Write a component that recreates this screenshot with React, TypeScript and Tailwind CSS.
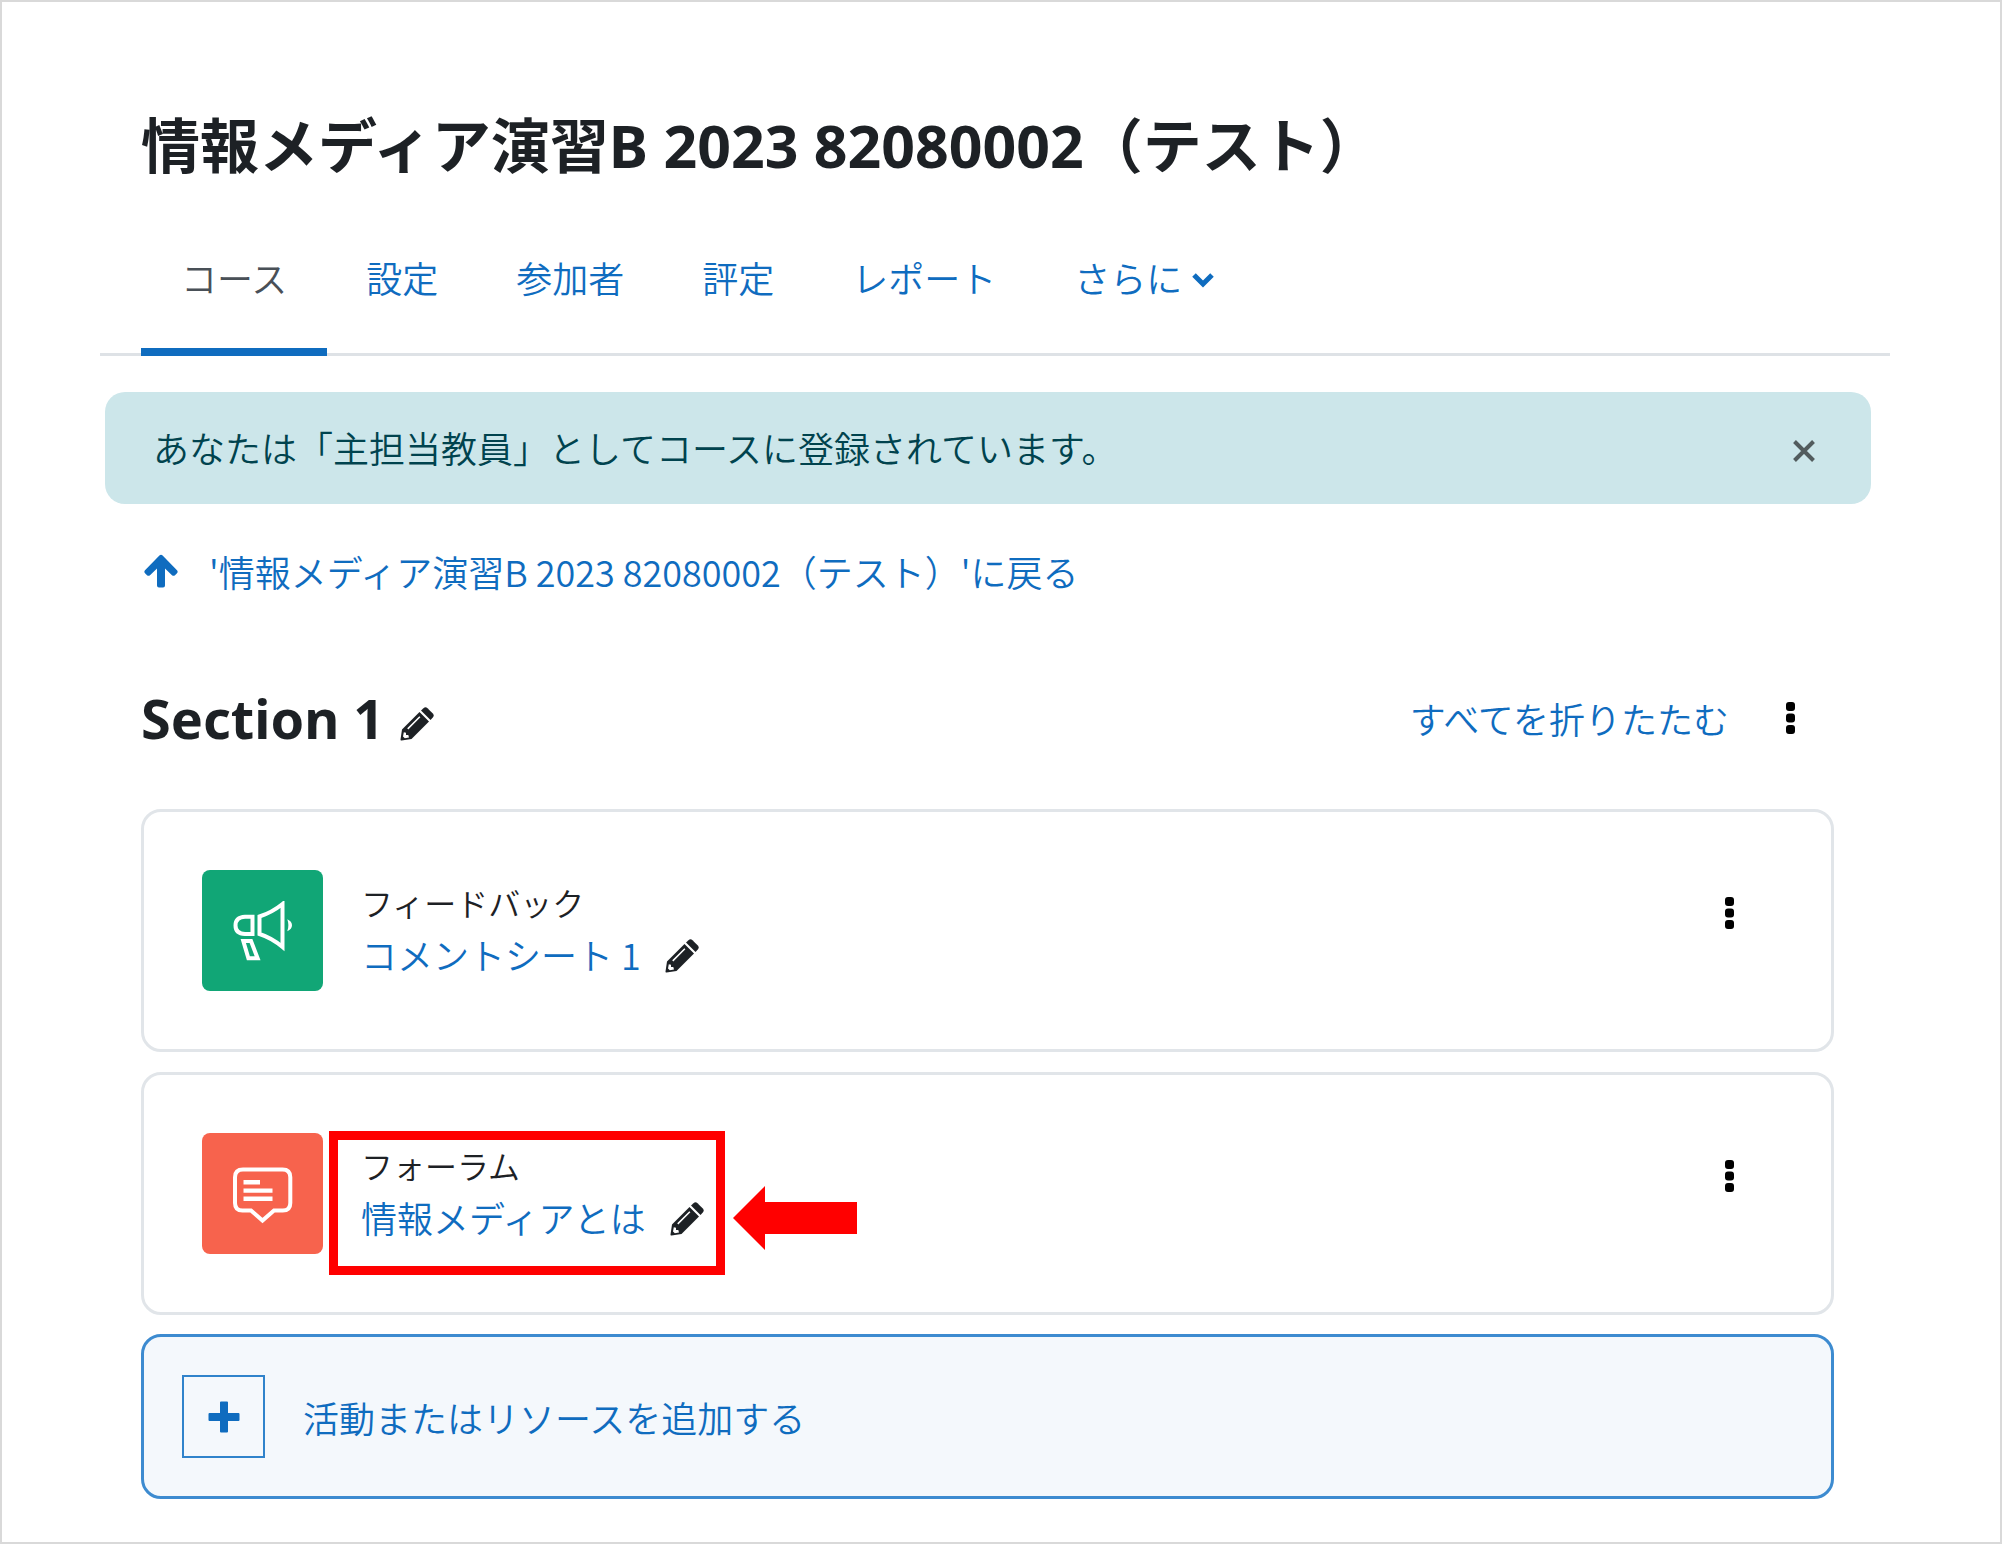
import React from "react";

const BODY_FONT = "font-['Noto_Sans_CJK_JP','Noto_Sans',sans-serif]";
const HEADING_FONT = "font-['Noto_Sans','Noto_Sans_CJK_JP',sans-serif]";

function Pencil() {
  return (
    <svg viewBox="0 0 34 34" className="size-[34px]" fill="#1d2125" aria-hidden="true">
      <path
        fillRule="evenodd"
        d="M2 22.500 19.500 5 29 14.500 11.500 32 1.500 33.500Q.300 33.700.500 32.500ZM3.800 25.200 3 29.500 4.800 31.200 9 30.400 8.300 28 6 28 6 25.800ZM19.300 9.200 7.200 21.300 8.300 22.400 20.400 10.300Z"
      />
      <path d="M21 3.500 23.500 1.200Q25.500-.600 27.500 1.200L32.800 6.500Q34.600 8.500 32.800 10.500L30.500 13Z" />
    </svg>
  );
}

function Dots() {
  return (
    <svg viewBox="0 0 12 32" className="h-8 w-3" fill="#000" aria-hidden="true">
      <rect x="1" y="0" width="9" height="9" rx="3" />
      <rect x="1" y="11.500" width="9" height="9" rx="3" />
      <rect x="1" y="23" width="9" height="9" rx="3" />
    </svg>
  );
}

function Megaphone() {
  return (
    <svg viewBox="0 0 60 60" className="size-[60px]" fill="none" stroke="#fff" strokeWidth="4" aria-hidden="true">
      <path d="M19.500 15.800V33h-7.500Q2.500 32.500 2.500 24.400T12 15.800Z" />
      <path d="M26.500 15.500Q39 11.500 49.500 3v43Q39 37 26.500 33Z" />
      <path d="M10.300 40.100h7.700l6.600 17.100h-9.200Z" />
      <path d="M54.300 18.300Q59 20.500 59 24.300T54.300 30.300Q56.500 24.300 54.300 18.300Z" fill="#fff" stroke="none" />
    </svg>
  );
}

function Speech() {
  return (
    <svg viewBox="0 0 60 60" className="size-[60px]" fill="none" stroke="#fff" strokeWidth="4" aria-hidden="true">
      <path d="M10 5.500h39.500q7.800 0 7.800 7.800V39q0 7.500-7.500 7.500H41L29.500 56.500 18 46.500H9.500Q2 46.500 2 39V13.300Q2 5.500 10 5.500Z" />
      <path d="M10.500 18.200h16.500M10.500 26.600h29M10.500 34.800h29" strokeWidth="4.400" />
    </svg>
  );
}

const TABS = ["設定", "参加者", "評定", "レポート"];

function Activity({
  kind,
  name,
  color,
  icon,
  children,
}: {
  kind: string;
  name: string;
  color: string;
  icon: React.ReactNode;
  children?: React.ReactNode;
}) {
  return (
    <li className="relative flex items-start rounded-[20px] border-[3px] border-[#e1e5e9] px-[58px] py-[58px]">
      <div className={`flex size-[121px] shrink-0 items-center justify-center rounded-lg ${color}`}>{icon}</div>
      <div className="ml-[38px] grow pt-[6px]">
        <p className="text-[32px] leading-[52px] text-[#1d2125]">{kind}</p>
        <div className="flex items-center gap-6">
          <a href="#activity" className="text-[36px] leading-[52px] text-[#0f6cbf]">{name}</a>
          <button type="button" aria-label={`${name}を編集`} className="pt-1"><Pencil /></button>
        </div>
      </div>
      <button type="button" aria-label={`${kind}メニュー`} className="mt-[27px] mr-[37px]"><Dots /></button>
      {children}
    </li>
  );
}

export default function App() {
  return (
    <div className={`min-h-screen border-2 border-[#d9d9d9] bg-white text-[36px] font-[350] text-[#0f6cbf] ${BODY_FONT}`}>
      <header className="mr-[110px] ml-[98px] border-b-[3px] border-[#dee2e6] pl-[41px]">
        <h1 className={`pt-[98px] text-[59px] leading-[90px] font-bold text-[#1d2125] ${HEADING_FONT}`}>
          情報メディア演習B 2023 82080002（テスト）
        </h1>
        <nav className="-mb-[3px] flex pt-[18px]">
          <a href="#course" className="border-b-8 border-[#0f6cbf] px-10 pt-[43px] pb-[45px] leading-[52px] text-[#495057]">コース</a>
          {TABS.map((t) => (
            <a key={t} href="#tab" className="px-[39px] pt-[43px] leading-[52px]">{t}</a>
          ))}
          <button type="button" className="flex items-start gap-[10px] px-[39px] pt-[43px] leading-[52px]">
            さらに
            <svg viewBox="0 0 22 16" className="mt-[21px] h-4 w-[22px]" fill="none" stroke="currentColor" strokeWidth="5" aria-hidden="true">
              <path d="m2 3 9 9 9-9" />
            </svg>
          </button>
        </nav>
      </header>

      <div role="status" className="mt-9 mr-[129px] ml-[103px] flex items-center justify-between rounded-[20px] bg-[#cce6ea] pt-[29px] pb-[31px] pr-[56px] pl-[48px] leading-[52px] text-[#00434e]">
        <p>あなたは「主担当教員」としてコースに登録されています。</p>
        <button type="button" aria-label="閉じる" className="pt-2">
          <svg viewBox="0 0 22 22" className="size-[22px]" fill="none" stroke="#525c5e" strokeWidth="4" aria-hidden="true">
            <path d="m1.500 1.500 19 19m0-19-19 19" />
          </svg>
        </button>
      </div>

      <main className="mr-[166px] ml-[139px]">
        <a href="#back" className="mt-[41px] flex items-center gap-[31px] pl-[3px] leading-[52px]">
          <svg viewBox="0 0 34 34" className="size-[34px]" fill="currentColor" aria-hidden="true">
            <path d="M15.400 1.600Q17 0 18.600 1.600L33 16.200Q34.300 17.700 33 19.200L31 21.200Q29.500 22.500 28 21.200L21 14.500V31.500Q21 33.500 19 33.500H15Q13 33.500 13 31.500V14.500L6 21.200Q4.500 22.500 3 21.200L1 19.200Q-.300 17.700 1 16.200Z" />
          </svg>
          <span>'情報メディア演習B 2023 82080002（テスト）'に戻る</span>
        </a>

        <div className="mt-[81px] flex items-center">
          <h2 className={`text-[54px] leading-[80px] font-bold text-[#1d2125] ${HEADING_FONT}`}>Section 1</h2>
          <button type="button" aria-label="セクションを編集" className="ml-4 pt-3"><Pencil /></button>
          <button type="button" className="ml-auto">すべてを折りたたむ</button>
          <button type="button" aria-label="セクションメニュー" className="mr-[37px] ml-[56px]"><Dots /></button>
        </div>

        <ul className="mt-[51px] flex flex-col gap-5">
          <Activity kind="フィードバック" name="コメントシート 1" color="bg-[#11a676]" icon={<Megaphone />} />
          <Activity kind="フォーラム" name="情報メディアとは" color="bg-[#f7634d]" icon={<Speech />}>
            <div className="absolute top-[56px] left-[185px] flex items-center">
              <div className="h-[144px] w-[396px] border-[9px] border-[#ff0000]" />
              <svg viewBox="0 0 124 64" className="ml-2 mt-[30px] h-16 w-[124px]" fill="#ff0000" aria-hidden="true">
                <path d="M0 32 32 0v16h92v32H32v16Z" />
              </svg>
            </div>
          </Activity>
        </ul>

        <button type="button" className="mt-[19px] flex w-full items-center gap-[38px] rounded-[20px] border-[3px] border-[#3d8bd0] bg-[#f4f8fc] px-[38px] py-[38px] leading-[52px]">
          <span className="flex size-[83px] items-center justify-center border-2 border-[#3083cb]">
            <svg viewBox="0 0 32 32" className="size-8" fill="currentColor" aria-hidden="true">
              <path d="M12 1.500Q12 .500 13 .500h6q1 0 1 1V12h10.500q1 0 1 1v6q0 1-1 1H20v10.500q0 1-1 1h-6q-1 0-1-1V20H1.500q-1 0-1-1v-6q0-1 1-1H12Z" />
            </svg>
          </span>
          活動またはリソースを追加する
        </button>
      </main>
    </div>
  );
}
